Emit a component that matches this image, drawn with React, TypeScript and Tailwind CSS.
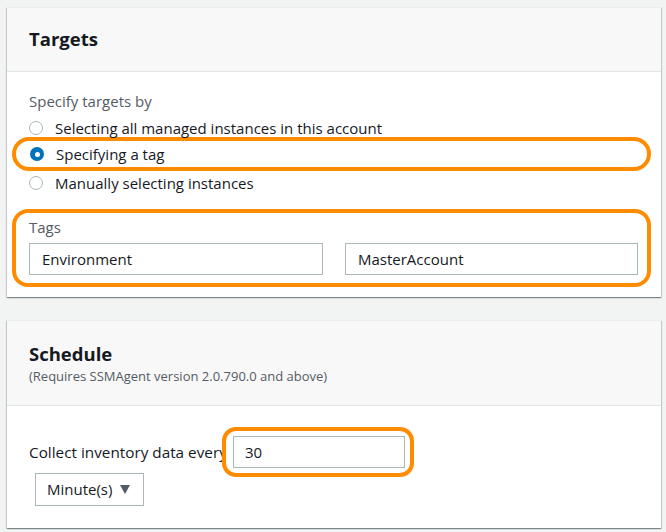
import React from "react";

const font = { fontFamily: '"Open Sans", "Noto Sans", Arial, sans-serif' };

function Radio({ checked }: { checked?: boolean }) {
  return checked ? (
    <span className="w-[14px] h-[14px] rounded-full bg-[#0073bb] flex items-center justify-center shrink-0">
      <span className="w-[5px] h-[5px] rounded-full bg-white" />
    </span>
  ) : (
    <span className="w-[14px] h-[14px] rounded-full border border-[#aab7b8] bg-white shrink-0" />
  );
}

export default function App() {
  return (
    <div className="w-[666px] h-[532px] bg-[#f2f3f3] pt-[7px] pl-[7px] pr-[5px] text-[#16191f] overflow-hidden" style={font}>
      {/* Targets card */}
      <div className="bg-white shadow-[0_1px_1px_0_rgba(0,28,36,0.3),1px_1px_1px_0_rgba(0,28,36,0.15),-1px_1px_1px_0_rgba(0,28,36,0.15)] border-t border-[#eaeded]">
        <div className="h-[64px] bg-[#f8f8f8] border-b border-[#e2e5e5] flex items-center px-[22px]">
          <h2 className="text-[18.5px] font-bold leading-none">Targets</h2>
        </div>
        <div className="pt-[19px] pb-[10px] pl-[5px] pr-[10px]">
          <div className="pl-[17px] text-[15px] leading-[20px] text-[#545b64]">Specify targets by</div>
          <div className="mt-[7px] pl-[17px] flex items-center gap-[12px] text-[15px] leading-[20px]">
            <Radio />
            <span>Selecting all managed instances in this account</span>
          </div>
          <div className="mt-[-1px] h-[34px] border-4 border-[#ff8c00] rounded-full pl-[14px] flex items-center gap-[12px] text-[15px] leading-[20px]">
            <Radio checked />
            <span>Specifying a tag</span>
          </div>
          <div className="mt-[2px] pl-[17px] flex items-center gap-[12px] text-[15px] leading-[20px]">
            <Radio />
            <span>Manually selecting instances</span>
          </div>
          <div className="mt-[16px] h-[78px] border-4 border-[#ff8c00] rounded-[16px] pl-[13px] pr-[9px] pt-[4px]">
            <div className="text-[15px] leading-[20px] text-[#545b64]">Tags</div>
            <div className="mt-[6px] flex gap-[22px]">
              <div className="w-[294px] h-[32px] border border-[#aab7b8] flex items-center px-[12px] text-[15px]">Environment</div>
              <div className="w-[293px] h-[32px] border border-[#aab7b8] flex items-center px-[12px] text-[15px]">MasterAccount</div>
            </div>
          </div>
        </div>
      </div>

      {/* Schedule card */}
      <div className="mt-[23px] bg-white shadow-[0_1px_1px_0_rgba(0,28,36,0.3),1px_1px_1px_0_rgba(0,28,36,0.15),-1px_1px_1px_0_rgba(0,28,36,0.15)] border-t border-[#eaeded]">
        <div className="h-[85px] bg-[#f8f8f8] border-b border-[#e2e5e5] flex flex-col justify-center px-[22px]">
          <h2 className="text-[18.5px] font-bold leading-[24px]">Schedule</h2>
          <div className="text-[13px] leading-[16px] text-[#545b64] mt-[2px]">(Requires SSMAgent version 2.0.790.0 and above)</div>
        </div>
        <div className="pt-[21px] pb-[22px] pl-[22px]">
          <div className="flex items-center">
            <div className="w-[193px] overflow-hidden whitespace-nowrap text-[15.3px] leading-[20px]">Collect inventory data every</div>
            <div className="w-[192px] h-[50px] border-4 border-[#ff8c00] rounded-[14px] pl-[7px] flex items-center bg-white">
              <div className="w-[172px] h-[32px] border border-[#aab7b8] flex items-center px-[11px] text-[15px]">30</div>
            </div>
          </div>
          <div className="mt-[-4px] ml-[6px] w-[109px] h-[33px] border border-[#aab7b8] flex items-center pl-[11px] gap-[8px] text-[15px]">
            <span>Minute(s)</span>
            <svg width="10" height="9" viewBox="0 0 10 9" className="shrink-0">
              <path d="M0 0 H10 L5 9 Z" fill="#545b64" />
            </svg>
          </div>
        </div>
      </div>
    </div>
  );
}
